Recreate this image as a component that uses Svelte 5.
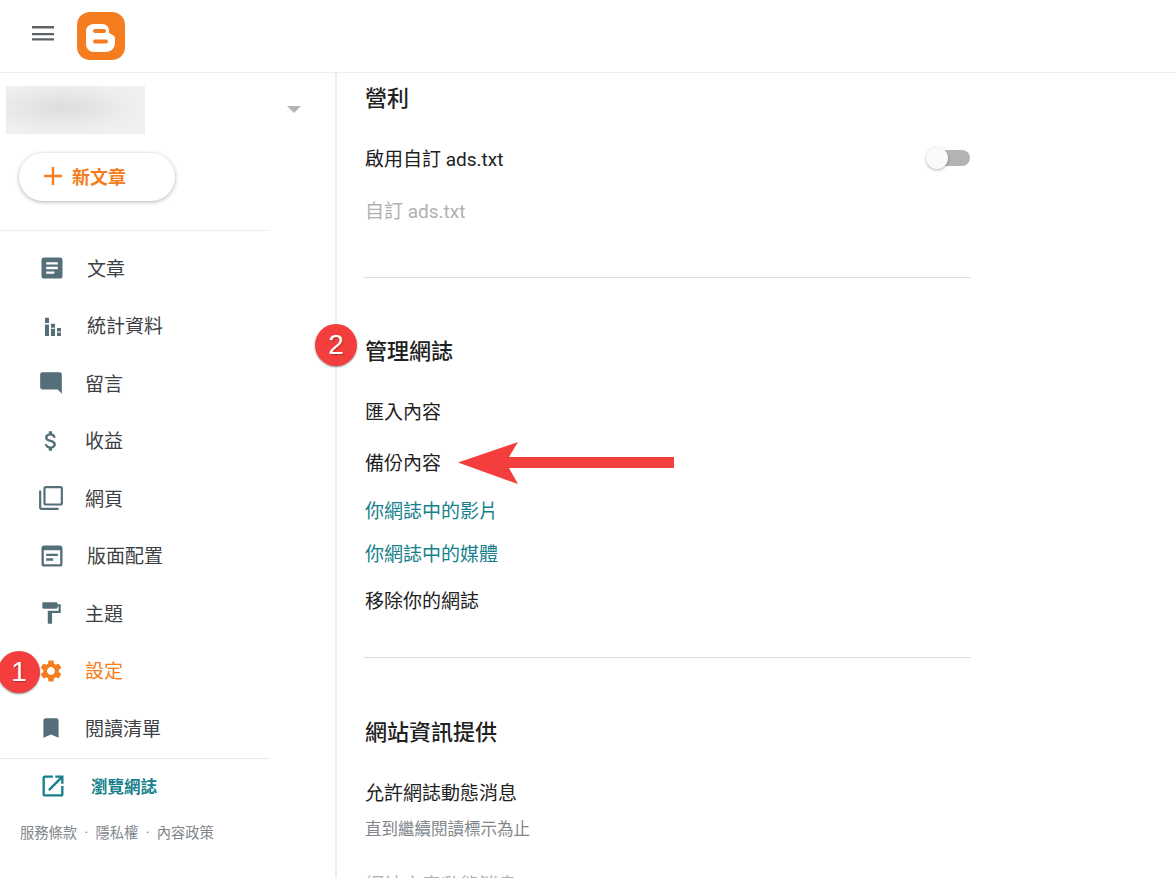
<script lang="ts">
  // ── Sidebar data ─────────────────────────────────────────────────────────────

  const navItems = [
    { label: '文章', wide: true, d: 'M19 3H5c-1.1 0-2 .9-2 2v14c0 1.1.9 2 2 2h14c1.1 0 2-.9 2-2V5c0-1.1-.9-2-2-2zm-5 14H7v-2h7v2zm3-4H7v-2h10v2zm0-4H7V7h10v2z' },
    { label: '統計資料', wide: true, d: 'M6 5h3.400v4.400H6zM6 10.700h3.400v9.800H6zM11.100 10h3.500v3.400h-3.500zM11.100 14.400h3.500v6.100h-3.500zM16.300 13.700h3.400v3.100h-3.400zM16.300 17.600h3.400v2.900h-3.400z' },
    { label: '留言', d: 'M21.99 4c0-1.1-.89-2-1.99-2H4c-1.1 0-2 .9-2 2v12c0 1.1.9 2 2 2h14l4 4-.01-18z' },
    { label: '收益', d: 'M11.8 10.9c-2.27-.59-3-1.2-3-2.15 0-1.09 1.01-1.85 2.7-1.85 1.78 0 2.44.85 2.5 2.1h2.21c-.07-1.72-1.12-3.3-3.21-3.81V3h-3v2.16c-1.94.42-3.5 1.68-3.5 3.61 0 2.31 1.91 3.46 4.7 4.13 2.5.6 3 1.48 3 2.41 0 .69-.49 1.79-2.7 1.79-2.06 0-2.87-.92-2.98-2.1h-2.2c.12 2.19 1.76 3.42 3.68 3.83V21h3v-2.15c1.95-.37 3.5-1.5 3.5-3.55 0-2.84-2.43-3.81-4.7-4.4z' },
    { label: '網頁', d: 'M3 5H1v16c0 1.1.9 2 2 2h16v-2H3V5zm18-4H7c-1.1 0-2 .9-2 2v14c0 1.1.9 2 2 2h14c1.1 0 2-.9 2-2V3c0-1.1-.9-2-2-2zm0 16H7V3h14v14z' },
    { label: '版面配置', wide: true, d: 'M19 3H5c-1.1 0-2 .9-2 2v14c0 1.1.9 2 2 2h14c1.1 0 2-.9 2-2V5c0-1.1-.9-2-2-2zm0 16H5V7h14v12zM7 10h10v2H7zM7 14h6v2H7z' },
    { label: '主題', d: 'M18 4V3c0-.55-.45-1-1-1H5c-.55 0-1 .45-1 1v4c0 .55.45 1 1 1h12c.55 0 1-.45 1-1V6h1v4H9v11c0 .55.45 1 1 1h2c.55 0 1-.45 1-1v-9h8V4h-3z' },
    { label: '設定', active: true, d: 'M19.14 12.94c.04-.3.06-.61.06-.94 0-.32-.02-.64-.07-.94l2.03-1.58c.18-.14.23-.41.12-.61l-1.92-3.32c-.12-.22-.37-.29-.59-.22l-2.39.96c-.5-.38-1.03-.7-1.62-.94l-.36-2.54c-.04-.24-.24-.41-.48-.41h-3.84c-.24 0-.43.17-.47.41l-.36 2.54c-.59.24-1.13.57-1.62.94l-2.39-.96c-.22-.08-.47 0-.59.22L2.74 8.87c-.12.21-.08.47.12.61l2.03 1.58c-.05.3-.09.63-.09.94s.02.64.07.94l-2.03 1.58c-.18.14-.23.41-.12.61l1.92 3.32c.12.22.37.29.59.22l2.39-.96c.5.38 1.03.7 1.62.94l.36 2.54c.05.24.24.41.48.41h3.84c.24 0 .44-.17.47-.41l.36-2.54c.59-.24 1.13-.56 1.62-.94l2.39.96c.22.08.47 0 .59-.22l1.92-3.32c.12-.22.07-.47-.12-.61l-2.01-1.58zM12 15.6c-1.98 0-3.6-1.62-3.6-3.6s1.62-3.6 3.6-3.6 3.6 1.62 3.6 3.6-1.62 3.6-3.6 3.6z' },
    { label: '閱讀清單', d: 'M17 3H7c-1.1 0-2 .9-2 2v16l7-3 7 3V5c0-1.1-.9-2-2-2z' }
  ];
</script>

<div class="page">
  <!-- ── Top bar ── -->
  <header class="topbar">
    <button class="menu-btn" aria-label="Menu">
      <svg width="24" height="24" viewBox="0 0 24 24" fill="#5f6368" aria-hidden="true">
        <path d="M1 2h22v2.4H1zM1 9h22v2.2H1zM1 14.2h22v2.2H1z"/>
      </svg>
    </button>
    <svg class="logo" width="48" height="48" viewBox="0 0 48 48" aria-hidden="true">
      <rect width="48" height="48" rx="13" fill="#f57d20"/>
      <path d="M17 12h8c4.500 0 7 3 7 6.500v1.500c0 1.200.8 1.800 2 2.200 2.500.8 4 2 4 4.300v4.500c0 5-4 9-9 9H17c-4.500 0-8-3.500-8-8V19c0-4 3.500-7 8-7z" fill="#fff"/>
      <rect x="16" y="17" width="13" height="4" rx="2" fill="#f57d20"/>
      <rect x="16" y="27.500" width="15" height="4" rx="2" fill="#f57d20"/>
    </svg>
  </header>

  <div class="body">
    <!-- ── Sidebar ── -->
    <aside class="sidebar">
      <div class="blog-switch">
        <div class="blog-name"></div>
        <span class="caret"></span>
      </div>

      <button class="new-post">
        <svg width="18" height="18" viewBox="0 0 18 18" fill="#f57d20" aria-hidden="true">
          <path d="M7.800 0h2.400v7.800H18v2.400h-7.800V18H7.800v-7.800H0V7.800h7.800z"/>
        </svg>
        <span>新文章</span>
      </button>

      <nav class="nav">
        {#each navItems as item (item.label)}
          <a class="nav-item" class:nav-item--active={item.active} class:nav-item--wide={item.wide} href="#top">
            <svg class="nav-icon" viewBox="0 0 24 24" aria-hidden="true"><path d={item.d}/></svg>
            <span>{item.label}</span>
          </a>
        {/each}
      </nav>

      <a class="view-blog" href="#top">
        <svg width="28" height="28" viewBox="0 0 24 24" fill="#16808c" aria-hidden="true">
          <path d="M19 19H5V5h7V3H5c-1.110 0-2 .9-2 2v14c0 1.100.89 2 2 2h14c1.100 0 2-.9 2-2v-7h-2v7zM14 3v2h3.590l-9.830 9.830 1.410 1.410L19 6.410V10h2V3h-7z"/>
        </svg>
        <span>瀏覽網誌</span>
      </a>

      <footer class="legal">
        <span>服務條款</span><i>·</i><span>隱私權</span><i>·</i><span>內容政策</span>
      </footer>
    </aside>

    <!-- ── Settings ── -->
    <main class="content">
      <h2 class="title">營利</h2>
      <div class="row toggle-row">
        <span>啟用自訂 ads.txt</span>
        <span class="toggle"><span class="thumb"></span></span>
      </div>
      <div class="row row--disabled gap-24">自訂 ads.txt</div>
      <hr class="rule rule--first" />

      <h2 class="title title--after-rule">管理網誌</h2>
      <div class="row gap-33">匯入內容</div>
      <div class="row gap-23">備份內容</div>
      <div class="row row--link gap-20">你網誌中的影片</div>
      <div class="row row--link gap-15">你網誌中的媒體</div>
      <div class="row gap-19">移除你的網誌</div>
      <hr class="rule rule--second" />

      <h2 class="title title--last">網站資訊提供</h2>
      <div class="row gap-33">允許網誌動態消息</div>
      <div class="desc">直到繼續閱讀標示為止</div>
      <div class="row row--disabled gap-last">網誌文章動態消息</div>
    </main>
  </div>

  <!-- ── Annotations drawn over the screenshot ── -->
  <span class="badge badge--one">1</span>
  <span class="badge badge--two">2</span>
  <svg class="arrow" width="218" height="42" viewBox="0 0 218 42" aria-hidden="true">
    <path d="M0 20.500 60 0 51 15h165v11H51l9 16z" fill="#f43e3e"/>
  </svg>
</div>

<style>
  :global(body) {
    margin: 0;
    background: #fff;
  }

  .page {
    position: relative;
    width: 1176px;
    height: 878px;
    overflow: hidden;
    background: #fff;
    font-family: Roboto, "Noto Sans CJK TC", sans-serif;
    color: #212121;
  }

  /* ── Top bar ── */

  .topbar {
    display: flex;
    align-items: center;
    height: 72px;
    padding-left: 31px;
    border-bottom: 1px solid #eeeeee;
  }

  .menu-btn {
    display: flex;
    width: 24px;
    height: 24px;
    padding: 0;
    border: 0;
    background: none;
  }

  .logo {
    margin-left: 22px;
  }

  .body {
    display: flex;
    height: 805px;
  }

  /* ── Sidebar ── */

  .sidebar {
    flex: none;
    width: 335px;
    height: 805px;
    border-right: 2px solid #ededed;
  }

  .blog-switch {
    display: flex;
    align-items: center;
    height: 48px;
    padding: 13px 0 0 6px;
  }

  .blog-name {
    width: 139px;
    height: 48px;
    background: radial-gradient(ellipse 60% 55% at 40% 45%, #dcdedd, #eeefee 90%);
  }

  .caret {
    margin: -2px 0 0 142px;
    border-left: 7px solid transparent;
    border-right: 7px solid transparent;
    border-top: 7px solid #b5b5b5;
  }

  .new-post {
    display: flex;
    align-items: center;
    gap: 10px;
    width: 156px;
    height: 48px;
    margin: 19px 0 0 19px;
    padding: 0 0 2px 25px;
    border: 0;
    border-radius: 24px;
    background: #fff;
    box-shadow: 0 1px 4px rgba(0, 0, 0, 0.3);
    color: #f57d20;
    font: inherit;
    font-size: 18px;
    font-weight: 700;
  }

  .nav {
    width: 270px;
    margin-top: 29px;
    padding: 7.5px 0 1.5px;
    border-top: 1px solid #eeeeee;
    border-bottom: 1px solid #e8eaed;
  }

  .nav-item {
    display: flex;
    align-items: center;
    height: 57.5px;
    padding-left: 38px;
    color: #3c4043;
    font-size: 19px;
    text-decoration: none;
  }

  .nav-item span {
    margin-left: 21px;
  }

  .nav-icon {
    flex: none;
    width: 26px;
    height: 26px;
    margin-top: 2px;
    fill: #546e7a;
  }

  .nav-item--wide .nav-icon {
    width: 28px;
    height: 28px;
  }

  .nav-item--active {
    color: #f57d20;
  }

  .nav-item--active .nav-icon {
    fill: #f57d20;
  }

  .view-blog {
    display: flex;
    align-items: center;
    height: 28px;
    margin-top: 13px;
    padding-left: 39px;
    color: #16808c;
    font-size: 16.5px;
    font-weight: 700;
    text-decoration: none;
  }

  .view-blog span {
    margin-left: 24px;
  }

  .legal {
    display: flex;
    margin-top: 23px;
    padding-left: 20px;
    color: #80868b;
    font-size: 14.25px;
    line-height: 20px;
  }

  .legal i {
    width: 18.5px;
    font-style: normal;
    text-align: center;
  }

  /* ── Settings ── */

  .content {
    width: 607px;
    margin-left: 27px;
    padding-top: 12px;
  }

  .title {
    margin: 0;
    padding-left: 1px;
    font-size: 22px;
    font-weight: 500;
    line-height: 28px;
  }

  .title--after-rule {
    margin-top: 60px;
  }

  .title--last {
    margin-top: 61px;
  }

  .row {
    padding-left: 1px;
    font-size: 19px;
    line-height: 28px;
  }

  .row--disabled {
    color: #b0b0b0;
  }

  .row--link {
    color: #16808c;
  }

  .toggle-row {
    display: flex;
    align-items: center;
    justify-content: space-between;
    margin-top: 33px;
  }

  .toggle {
    position: relative;
    width: 43px;
    height: 16px;
    margin: -4px 1px 0 0;
    border-radius: 8px;
    background: #b3b3b3;
  }

  .thumb {
    position: absolute;
    top: -3px;
    left: -1px;
    width: 22px;
    height: 22px;
    border-radius: 50%;
    background: #fafafa;
    box-shadow: 0 1px 3px rgba(0, 0, 0, 0.3);
  }

  .gap-15 { margin-top: 15px; }
  .gap-19 { margin-top: 19px; }
  .gap-20 { margin-top: 20px; }
  .gap-23 { margin-top: 23px; }
  .gap-24 { margin-top: 24px; }
  .gap-33 { margin-top: 33px; }
  .gap-last { margin-top: 29px; }

  .rule {
    height: 1px;
    margin: 0;
    border: 0;
    background: #dddddd;
  }

  .rule--first { margin-top: 51px; }
  .rule--second { margin-top: 41px; }

  .desc {
    margin-top: 9px;
    padding-left: 1px;
    color: #80868b;
    font-size: 16.5px;
    line-height: 26px;
  }

  /* ── Annotations ── */

  .badge {
    position: absolute;
    width: 42px;
    height: 42px;
    border-radius: 50%;
    background: #f43e3e;
    box-shadow: 0 1px 2px rgba(0, 0, 0, 0.45);
    color: #fff;
    font-family: "Liberation Sans", sans-serif;
    font-size: 28px;
    line-height: 42px;
    text-align: center;
    text-shadow: 1px 1px 1px rgba(0, 0, 0, 0.3);
  }

  .badge--one {
    top: 651px;
    left: -2px;
  }

  .badge--two {
    top: 324px;
    left: 315px;
  }

  .arrow {
    position: absolute;
    top: 442px;
    left: 458px;
  }
</style>
